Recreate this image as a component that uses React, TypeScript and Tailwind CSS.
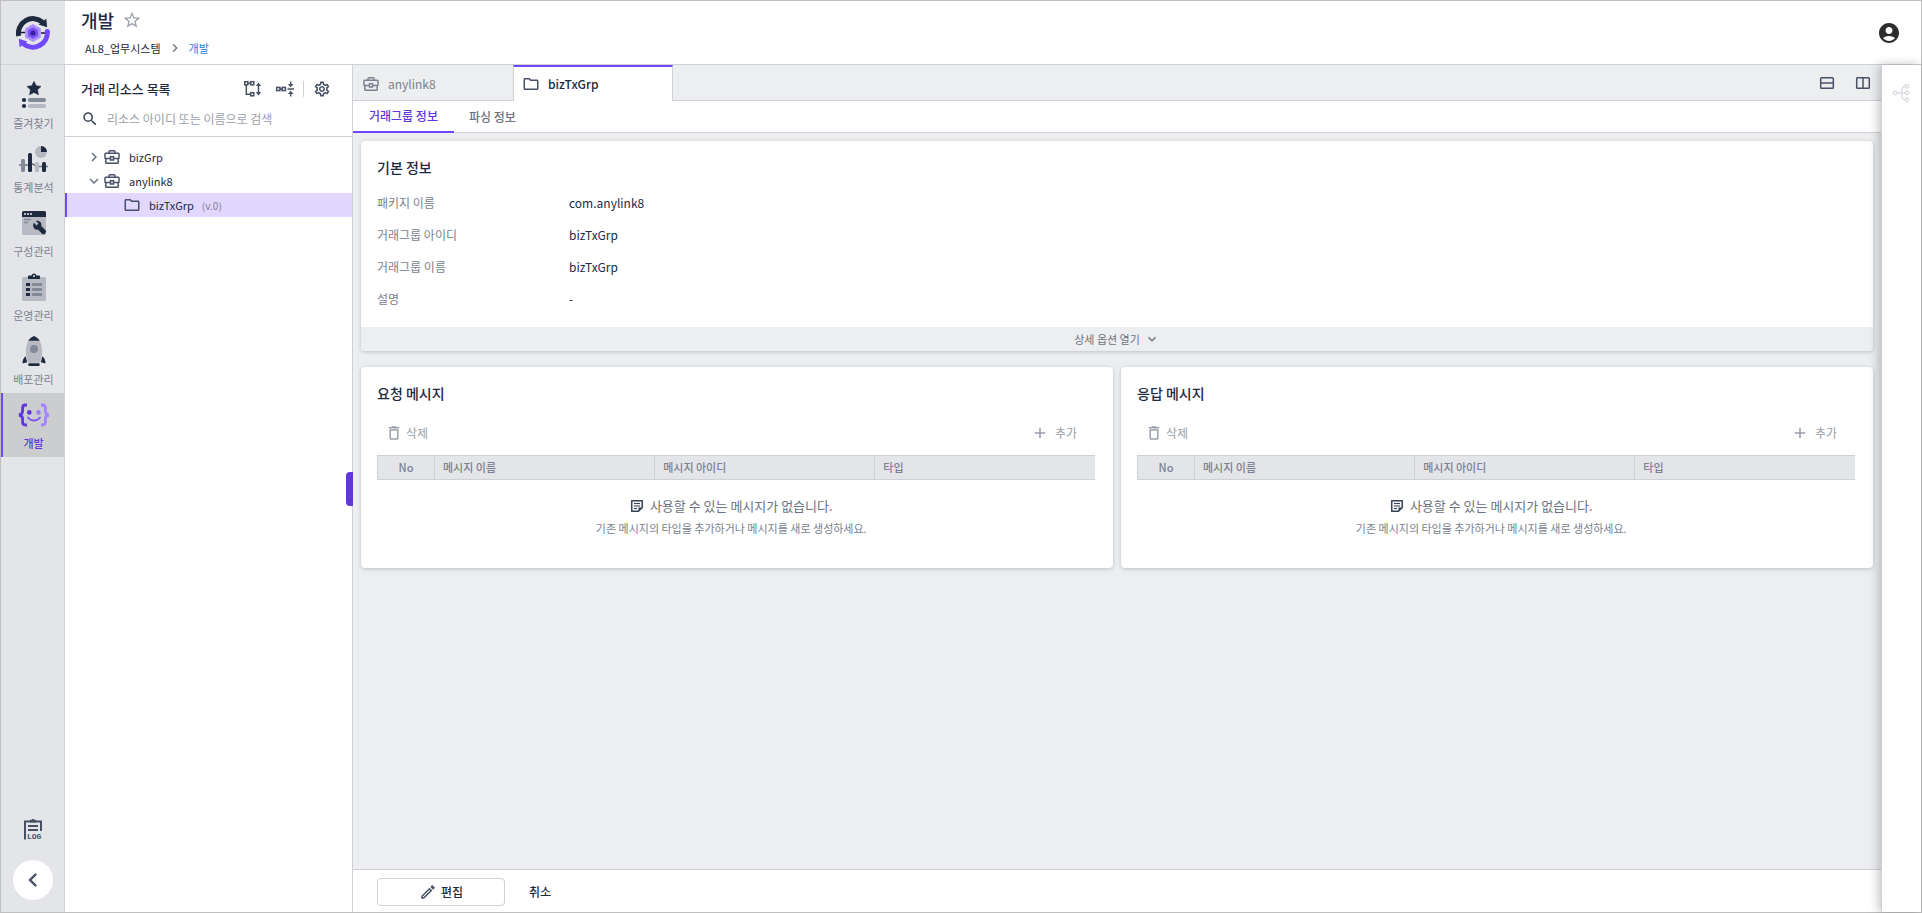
import { useState } from 'react';
import {
  MdAccountCircle,
  MdAdd,
  MdChevronLeft,
  MdChevronRight,
  MdDeleteOutline,
  MdExpandMore,
  MdOutlineEdit,
  MdOutlineFolder,
  MdOutlineSettings,
  MdSearch,
  MdStarBorder
} from 'react-icons/md';

type IconProps = {
  className?: string
};

type NavItem = {
  label: string,
  icon: React.JSX.Element
};

type MessageCardProps = {
  title: string
};

const Logo = () => (
  <svg width="34" height="34" viewBox="0 0 34 34" fill="none">
    <path d="M4 16.5h5M25 17h5" stroke="#111827" strokeWidth="1.6" />
    <path d="M2.7 20A14.6 14.6 0 0 1 26.5 6.1" stroke="#1d2a3f" strokeWidth="5" />
    <path d="M30.3 2.8l.8 8.4-8.5-2.6z" fill="#1d2a3f" />
    <path d="M31.3 15.5A14.6 14.6 0 0 1 7.5 27.9" stroke="#7048ff" strokeWidth="5" />
    <circle cx="31.3" cy="15.5" r="2.5" fill="#7048ff" />
    <path d="M3.6 31.2l-.8-8.4 8.6 2.6z" fill="#7048ff" />
    <path d="M17 8l7.8 4.5v9L17 26l-7.8-4.5v-9z" fill="#ab8fff" />
    <path d="M17 11.2l5 2.9v5.8l-5 2.9-5-2.9v-5.8z" fill="#7c50f5" />
    <circle cx="17" cy="17" r="2.6" fill="#3a1f9c" />
  </svg>
);

const FavoriteIcon = () => (
  <svg width="32" height="32" viewBox="0 0 32 32">
    <path d="M16 2.4l2.2 4.3 4.8.7-3.5 3.4.9 4.9-4.4-2.3-4.4 2.3.9-4.9L9 7.4l4.8-.7z" fill="#1d2a3f" stroke="#1d2a3f" strokeWidth=".6" strokeLinejoin="round" />
    <circle cx="6" cy="21" r="2.1" fill="#1d2a3f" />
    <circle cx="6" cy="27" r="2.1" fill="#1d2a3f" />
    <rect x="10" y="19" width="18" height="4" rx="1.8" fill="#828997" />
    <rect x="10" y="25" width="18" height="4" rx="1.8" fill="#b7bac3" />
  </svg>
);

const StatsIcon = () => (
  <svg width="32" height="32" viewBox="0 0 32 32">
    <path d="M1 22h10l2-1.5 7 3h10" fill="none" stroke="#6b7280" strokeWidth="1.6" />
    <circle cx="23" cy="9" r="6" fill="#b7bac3" />
    <path d="M23 3a6 6 0 0 1 6 6h-6z" fill="#1d2a3f" />
    <rect x="3" y="16" width="4" height="13" rx="1.5" fill="#828997" />
    <rect x="10" y="10" width="4" height="19" rx="1.5" fill="#1d2a3f" />
    <rect x="17" y="19" width="4" height="10" rx="1.5" fill="#b7bac3" />
    <rect x="24" y="19" width="4" height="10" rx="1.5" fill="#1d2a3f" />
  </svg>
);

const ConfigIcon = () => (
  <svg width="32" height="32" viewBox="0 0 32 32">
    <path d="M4 10h24v16.5a1.5 1.5 0 0 1-1.5 1.5h-21A1.5 1.5 0 0 1 4 26.5z" fill="#b7bac3" />
    <path d="M4 10V5.5A1.5 1.5 0 0 1 5.5 4h21A1.5 1.5 0 0 1 28 5.5V10z" fill="#1d2a3f" />
    <path d="M6 7h2M9 7h2M12 7h2" stroke="#b7bac3" strokeWidth="2" />
    <path d="M6 12.5h7M6 15.5h4" stroke="#828997" strokeWidth="1.5" />
    <path d="M15.8 15.8l2.7 2.7 2-2-2.6-2.6c3.2-1 6.3 1.7 5.4 5l4.2 4.4a1.9 1.9 0 0 1 0 2.7l-.8.8a1.9 1.9 0 0 1-2.5-.1l-4.4-4.1c-3.7 1-5.7-3.4-4-6.8z" fill="#1d2a3f" />
  </svg>
);

const OperationIcon = () => (
  <svg width="32" height="32" viewBox="0 0 32 32">
    <rect x="4" y="6" width="24" height="24" rx="1.5" fill="#b7bac3" />
    <path d="M10 8V5.5a1 1 0 0 1 1-1h2.5a2.6 2.6 0 0 1 5 0H21a1 1 0 0 1 1 1V8z" fill="#1d2a3f" />
    <circle cx="16" cy="5" r="1" fill="#e4e5e9" />
    <path d="M8 13.5h4M8 18.5h4M8 23.5h4" stroke="#1d2a3f" strokeWidth="3" />
    <path d="M15 13.5h8M15 18.5h8M15 23.5h8" stroke="#828997" strokeWidth="2.8" strokeLinecap="round" />
  </svg>
);

const RocketIcon = () => (
  <svg width="32" height="32" viewBox="0 0 32 32">
    <path d="M10.5 5.5h11c3.4 6 3.4 14.5.5 22.2H10c-2.9-7.7-2.9-16.2.5-22.2z" fill="#b7bac3" />
    <path d="M16 1c2 .6 4.2 2.4 5.7 4.8H10.3C11.8 3.4 14 1.6 16 1z" fill="#1d2a3f" />
    <circle cx="16" cy="14" r="4" fill="#828997" />
    <path d="M7.6 21.3l1.6 6-4.7 1.2c0-2.9.8-5.4 3.1-7.2zM24.4 21.3l-1.6 6 4.7 1.2c0-2.9-.8-5.4-3.1-7.2z" fill="#1d2a3f" />
    <rect x="10.3" y="28.3" width="11.4" height="2.6" rx="1" fill="#1d2a3f" />
  </svg>
);

const DevIcon = () => (
  <svg width="32" height="32" viewBox="0 0 32 32" fill="none">
    <path d="M9 6H7.5C5 6 4.6 7.5 4.6 9v3c0 2-.8 3.5-3.6 4 2.8.5 3.6 2 3.6 4v3c0 1.5.4 3 2.9 3H9" stroke="#5f37dc" strokeWidth="2.8" />
    <path d="M23 6h1.5c2.5 0 2.9 1.5 2.9 3v3c0 2 .8 3.5 3.6 4-2.8.5-3.6 2-3.6 4v3c0 1.5-.4 3-2.9 3H23" stroke="#a584ff" strokeWidth="2.8" />
    <circle cx="11.3" cy="13.4" r="2.3" fill="#5f37dc" />
    <path d="M20.5 11v4.8M18.4 12.2l4.2 2.4M18.4 14.6l4.2-2.4" stroke="#9673fb" strokeWidth="1.5" />
    <path d="M10 18.5c3 4 9 4 12 0" stroke="#8259f5" strokeWidth="2" strokeLinecap="round" />
  </svg>
);

const LogIcon = () => (
  <svg width="22" height="26" viewBox="0 0 22 26" fill="none">
    <path d="M3 21.5V3.5h16V13" stroke="#475064" strokeWidth="2" />
    <path d="M8 4V2.3h1.6a1.5 1.5 0 0 1 2.8 0H14V4z" fill="#475064" stroke="#475064" />
    <path d="M6 8h10M6 12h10" stroke="#475064" strokeWidth="2" />
    <text x="5" y="21" fontSize="8" fontWeight="700" fontFamily="Liberation Mono, monospace" fill="#475064">LOG</text>
  </svg>
);

const BriefcaseIcon = ({ className }: IconProps) => (
  <svg width="18" height="18" viewBox="0 0 18 18" fill="none" stroke="currentColor" strokeWidth="1.5" className={className}>
    <path d="M6 5V3.7A1 1 0 0 1 7 2.7h4a1 1 0 0 1 1 1V5" />
    <rect x="2" y="5.2" width="14" height="5.3" rx=".8" />
    <path d="M2.8 10.5v4a.8.8 0 0 0 .8.8h10.8a.8.8 0 0 0 .8-.8v-4" />
    <rect x="7.5" y="8.7" width="3" height="3.3" fill="#fff" />
  </svg>
);

const TreeExpandIcon = () => (
  <svg width="20" height="18" viewBox="0 0 20 18" fill="none" stroke="#475064" strokeWidth="1.5">
    <rect x="1.7" y="1.7" width="3.1" height="3.1" />
    <rect x="7.7" y="1.7" width="3.1" height="3.1" />
    <rect x="7.7" y="12.7" width="3.1" height="3.1" />
    <path d="M4.8 3.3h2.9M3.3 4.8v9.5h4.4M15.5 4.5v9" />
    <path d="M12.8 6l2.7-3.5L18.2 6zM12.8 12l2.7 3.5 2.7-3.5z" fill="#475064" stroke="none" />
  </svg>
);

const TreeCollapseIcon = () => (
  <svg width="20" height="18" viewBox="0 0 20 18" fill="none" stroke="#475064" strokeWidth="1.5">
    <rect x="1.7" y="7.4" width="3.2" height="3.2" />
    <rect x="7.2" y="7.4" width="3.2" height="3.2" />
    <path d="M4.9 9h2.3M12.5 9H19M15.7 1.5v3M15.7 16.5v-3" />
    <path d="M12.9 4l2.8 3.2L18.5 4zM12.9 14l2.8-3.2 2.8 3.2z" fill="#475064" stroke="none" />
  </svg>
);

const SplitRowsIcon = () => (
  <svg width="16" height="16" viewBox="0 0 16 16" fill="none" stroke="#475064" strokeWidth="1.5">
    <rect x="1.7" y="2.7" width="12.6" height="10.6" rx=".8" />
    <path d="M2 8h12" />
  </svg>
);

const SplitColumnsIcon = () => (
  <svg width="16" height="16" viewBox="0 0 16 16" fill="none" stroke="#475064" strokeWidth="1.5">
    <rect x="1.7" y="2.7" width="12.6" height="10.6" rx=".8" />
    <path d="M8 3v10" />
  </svg>
);

const FlowIcon = () => (
  <svg width="18" height="20" viewBox="0 0 18 20" fill="none" stroke="#dcdee3" strokeWidth="1.5">
    <circle cx="3" cy="10" r="1.7" />
    <circle cx="15" cy="3.2" r="1.7" />
    <circle cx="15" cy="10" r="1.7" />
    <circle cx="15" cy="16.8" r="1.7" />
    <path d="M4.7 10h8.6M13.3 3.2C10 3.2 9.5 6 9.5 10s.5 6.8 3.8 6.8" />
  </svg>
);

const NoteIcon = () => (
  <svg width="14" height="14" viewBox="0 0 14 14" fill="none">
    <path d="M1.7 1.7h10.6v6.8l-3.8 3.8H1.7z" fill="#f1f2f4" stroke="#3b4458" strokeWidth="1.5" strokeLinejoin="round" />
    <path d="M12.5 8.5h-4v4z" fill="#3b4458" />
    <path d="M4 4.5h6M4 7h6M4 9.5h3" stroke="#3b4458" strokeWidth="1" />
  </svg>
);

const navItems: NavItem[] = [
  { label: '즐겨찾기', icon: <FavoriteIcon /> },
  { label: '통계분석', icon: <StatsIcon /> },
  { label: '구성관리', icon: <ConfigIcon /> },
  { label: '운영관리', icon: <OperationIcon /> },
  { label: '배포관리', icon: <RocketIcon /> },
  { label: '개발', icon: <DevIcon /> }
];

const details = [
  { label: '패키지 이름', value: 'com.anylink8' },
  { label: '거래그룹 아이디', value: 'bizTxGrp' },
  { label: '거래그룹 이름', value: 'bizTxGrp' },
  { label: '설명', value: '-' }
];

const Header = () => (
  <header className="flex h-16 shrink-0 border-b border-[#d0d1d8]">
    <a href="#home" aria-label="홈" className="flex w-16 items-center justify-center bg-[#e4e5e9]">
      <Logo />
    </a>
    <div className="flex flex-1 items-center justify-between pl-4 pr-5">
      <div>
        <div className="flex items-center gap-2">
          <h1 className="text-[18px] font-medium leading-6">개발</h1>
          <button type="button" aria-label="즐겨찾기 추가" className="text-[#9ca1ab]">
            <MdStarBorder size={20} />
          </button>
        </div>
        <nav aria-label="경로" className="mt-1.5 flex items-center gap-1.5 pl-1 text-[11px] leading-5">
          <a href="#system">AL8_업무시스템</a>
          <MdChevronRight size={16} className="text-[#6b7280]" />
          <a href="#dev" className="text-[#1a7fe0]">개발</a>
        </nav>
      </div>
      <button type="button" aria-label="내 계정" className="text-[#2d2d2f]">
        <MdAccountCircle size={24} />
      </button>
    </div>
  </header>
);

const NavRail = () => {
  const [active, setActive] = useState('개발');

  return (
    <nav className="flex w-16 shrink-0 flex-col justify-between border-r border-[#d0d1d8] bg-[#e4e5e9] pt-2 pb-3">
      <ul>
        {navItems.map((item) =>
          <li key={item.label}>
            <button
              type="button"
              onClick={() => setActive(item.label)}
              className={`
                flex h-16 w-full flex-col items-center gap-1
                border-l-2 pt-1.5
                text-[11px] leading-4
                ${active === item.label
                  ? "border-[#7048ff] bg-[#cccdce] font-medium text-[#5f37dc]"
                  : "border-transparent text-[#7b818e]"
                }
              `}
            >
              {item.icon}
              {item.label}
            </button>
          </li>
        )}
      </ul>
      <div className="flex flex-col items-center gap-4">
        <button type="button" aria-label="로그">
          <LogIcon />
        </button>
        <button
          type="button"
          aria-label="메뉴 접기"
          className="flex size-10 items-center justify-center rounded-full bg-white text-[#475064]"
        >
          <MdChevronLeft size={28} />
        </button>
      </div>
    </nav>
  );
};

const ResourcePanel = () => (
  <aside className="relative flex w-72 shrink-0 flex-col border-r border-[#d0d1d8]">
    <div className="border-b border-[#d0d1d8] px-4 pb-[5px] pt-3">
      <div className="flex h-6 items-center justify-between">
        <h2 className="text-[13px] font-medium leading-5">거래 리소스 목록</h2>
        <div className="flex items-center">
          <button type="button" aria-label="모두 펼치기"><TreeExpandIcon /></button>
          <button type="button" aria-label="모두 접기" className="ml-3"><TreeCollapseIcon /></button>
          <span className="ml-2 mr-[9px] h-4 w-px bg-[#d0d1d8]" />
          <button type="button" aria-label="설정" className="mr-[5px] text-[#475064]"><MdOutlineSettings size={18} /></button>
        </div>
      </div>
      <label className="mt-1.5 flex h-6 items-center gap-2 text-[#3b4458]">
        <MdSearch size={18} />
        <input
          type="text"
          aria-label="리소스 검색"
          placeholder="리소스 아이디 또는 이름으로 검색"
          className="min-w-0 flex-1 text-[12px] outline-none placeholder:text-[#9a9faa]"
        />
      </label>
    </div>
    <ul className="pt-2 text-[11px]">
      <li>
        <button type="button" className="flex h-6 w-full items-center pl-5">
          <MdChevronRight size={18} className="text-[#6b7280]" />
          <BriefcaseIcon className="text-[#475064]" />
          <span className="ml-2">bizGrp</span>
        </button>
      </li>
      <li>
        <button type="button" className="flex h-6 w-full items-center pl-5">
          <MdExpandMore size={18} className="text-[#6b7280]" />
          <BriefcaseIcon className="text-[#475064]" />
          <span className="ml-2">anylink8</span>
        </button>
      </li>
      <li>
        <button type="button" className="flex h-6 w-full items-center border-l-2 border-[#7048ff] bg-[#e1d7ff] pl-14">
          <MdOutlineFolder size={18} className="text-[#475064]" />
          <span className="ml-2">bizTxGrp</span>
          <span className="ml-2 text-[10px] text-[#7b818e]">(v.0)</span>
        </button>
      </li>
    </ul>
    <button
      type="button"
      aria-label="패널 접기"
      className="absolute -right-px top-[407px] h-[34px] w-[7px] rounded-l-sm bg-[#5f37dc]"
    />
  </aside>
);

const EditorTabs = () => (
  <div className="flex h-9 shrink-0">
    <button type="button" className="flex w-40 items-center gap-2 border-b border-[#d0d1d8] pl-[9px] pt-0.5 text-[12px] text-[#7b818e]">
      <BriefcaseIcon />
      anylink8
    </button>
    <button
      type="button"
      className="flex w-40 items-center gap-2 border-x border-t-2 border-x-[#d0d1d8] border-t-[#7048ff] bg-white pl-2 text-[12px] font-medium"
    >
      <MdOutlineFolder size={18} className="text-[#475064]" />
      bizTxGrp
    </button>
    <div className="flex flex-1 items-center justify-end gap-5 border-b border-[#d0d1d8] pr-2.5">
      <button type="button" aria-label="가로 분할"><SplitRowsIcon /></button>
      <button type="button" aria-label="세로 분할"><SplitColumnsIcon /></button>
    </div>
  </div>
);

const SubTabs = () => (
  <div className="flex h-8 shrink-0 border-b border-[#d0d1d8] bg-white text-[12px] font-medium">
    <button type="button" className="-mb-px border-b-2 border-[#7048ff] px-4 text-[#5f37dc]">거래그룹 정보</button>
    <button type="button" className="px-[15px] text-[#6b7280]">파싱 정보</button>
  </div>
);

const BasicInfoCard = () => (
  <section className="overflow-hidden rounded bg-white shadow-[0_1px_4px_rgba(0,0,0,0.2)]">
    <div className="px-4 pb-3 pt-4">
      <h2 className="text-[14px] font-medium leading-5">기본 정보</h2>
      <dl className="mt-2.5">
        {details.map((detail) =>
          <div key={detail.label} className="flex h-8 items-center">
            <dt className="w-48 text-[12px] text-[#7b818e]">{detail.label}</dt>
            <dd className="text-[12px]">{detail.value}</dd>
          </div>
        )}
      </dl>
    </div>
    <button
      type="button"
      className="flex h-6 w-full items-center justify-center gap-1 bg-[#edeef0] text-[11px] text-[#6b7280]"
    >
      상세 옵션 열기
      <MdExpandMore size={16} />
    </button>
  </section>
);

const MessageCard = ({ title }: MessageCardProps) => (
  <section className="flex-1 rounded bg-white pb-7 pl-4 pr-[18px] pt-4 shadow-[0_1px_4px_rgba(0,0,0,0.2)]">
    <h2 className="text-[14px] font-medium leading-5">{title}</h2>
    <div className="mb-2.5 mt-[18px] flex h-6 items-center justify-between pl-2 pr-[18px] text-[12px] text-[#9a9faa]">
      <button type="button" className="flex items-center gap-[3px]">
        <MdDeleteOutline size={18} />
        삭제
      </button>
      <button type="button" className="flex items-center gap-1.5">
        <MdAdd size={18} />
        추가
      </button>
    </div>
    <table className="w-full table-fixed border-collapse text-left text-[11px] text-[#7b818e]">
      <thead>
        <tr className="h-6 border-y border-l border-[#d0d1d8] bg-[#e4e5e9]">
          <th className="w-[57px] text-center font-medium">No</th>
          <th className="border-l border-[#d0d1d8] px-2 font-medium">메시지 이름</th>
          <th className="border-l border-[#d0d1d8] px-2 font-medium">메시지 아이디</th>
          <th className="border-l border-[#d0d1d8] px-2 font-medium">타입</th>
        </tr>
      </thead>
      <tbody>
        <tr>
          <td colSpan={4} className="pr-2.5 pt-4 pb-0.5 text-center">
            <p className="flex items-center justify-center gap-1.5 text-[13px] leading-5 text-[#6b7280]">
              <NoteIcon />
              사용할 수 있는 메시지가 없습니다.
            </p>
            <p className="mt-0.5 leading-5">기존 메시지의 타입을 추가하거나 메시지를 새로 생성하세요.</p>
          </td>
        </tr>
      </tbody>
    </table>
  </section>
);

const Workspace = () => (
  <main className="flex min-w-0 flex-1 flex-col bg-[#edeef0]">
    <EditorTabs />
    <SubTabs />
    <div className="flex flex-1 flex-col gap-4 p-2">
      <BasicInfoCard />
      <div className="flex gap-2">
        <MessageCard title="요청 메시지" />
        <MessageCard title="응답 메시지" />
      </div>
    </div>
    <footer className="flex items-center gap-6 border-t border-[#d0d1d8] bg-white px-6 pb-1.5 pt-2 text-[12px] font-medium">
      <button
        type="button"
        className="flex h-7 w-32 items-center justify-center gap-1 rounded border border-[#d0d1d8]"
      >
        <MdOutlineEdit size={18} className="text-[#475064]" />
        편집
      </button>
      <button type="button">취소</button>
    </footer>
  </main>
);

const App = () => (
  <div className="flex min-h-screen flex-col border border-[#bfbfbf] bg-white font-['Noto_Sans_CJK_KR',sans-serif] text-[#1d2a3f]">
    <Header />
    <div className="flex flex-1">
      <NavRail />
      <ResourcePanel />
      <Workspace />
      <aside className="flex w-10 shrink-0 flex-col items-center border-l border-[#d0d1d8] bg-white pt-[18px] shadow-[-2px_0_10px_rgba(0,0,0,0.25)]">
        <button type="button" aria-label="흐름 보기" className="pr-0.5">
          <FlowIcon />
        </button>
      </aside>
    </div>
  </div>
);

export default App;
